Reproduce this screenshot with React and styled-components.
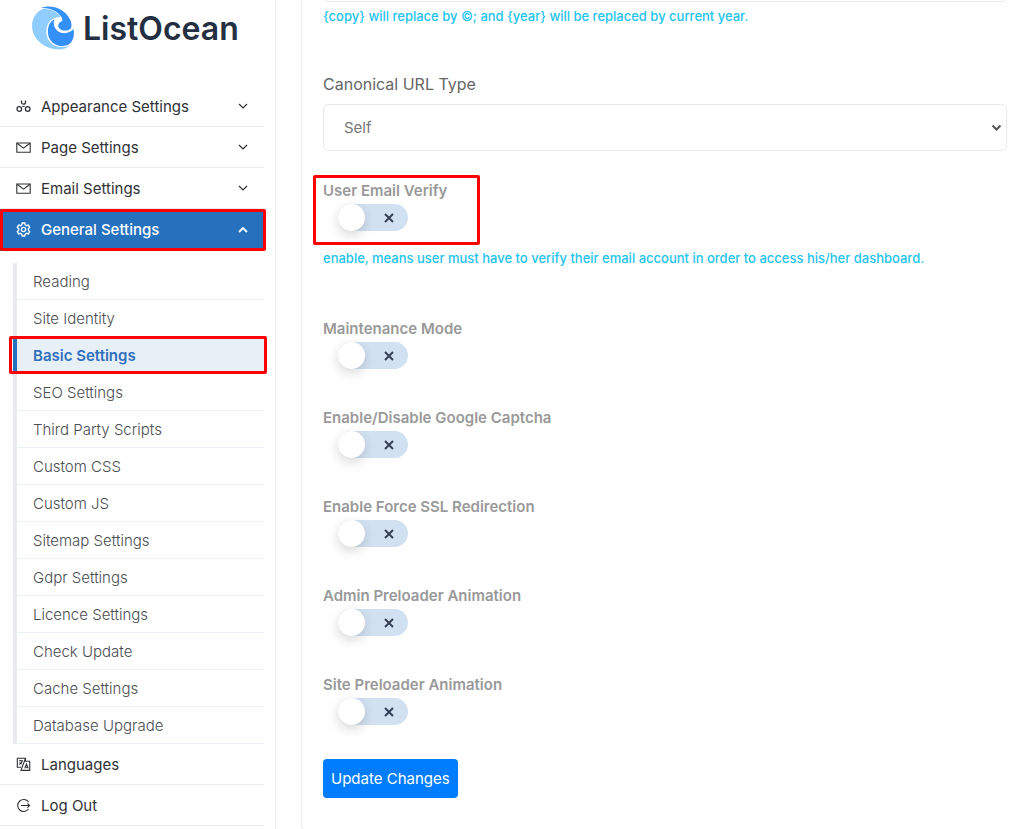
import React, { useState } from "react";
import styled, { createGlobalStyle } from "styled-components";

const GlobalStyle = createGlobalStyle`
  * {
    box-sizing: border-box;
  }
  body {
    margin: 0;
    background: #fff;
    font-family: Inter, "Liberation Sans", sans-serif;
  }
`;

const Page = styled.div`
  display: flex;
  gap: 25px;
  min-height: 100vh;
  overflow: hidden;
`;

const Sidebar = styled.aside`
  width: 276px;
  flex-shrink: 0;
  padding-right: 11px;
  border-right: 1px solid #ececf1;
`;

const Logo = styled.a`
  display: flex;
  align-items: center;
  gap: 8px;
  height: 86px;
  padding: 6px 0 36px 31px;
  color: #243042;
  font-size: 32px;
  font-weight: 600;
  text-decoration: none;
`;

const List = styled.ul`
  margin: 0;
  padding: 0;
  list-style: none;
`;

// red frame drawn around the parts a user should look at
const Marked = styled.div`
  position: relative;
  &::after {
    content: "";
    position: absolute;
    inset: ${props => props.$inset || "0"};
    border: 3px solid #fe0000;
    border-radius: 2px;
    pointer-events: none;
  }
`;

const NavLink = styled.a`
  display: flex;
  align-items: center;
  gap: 10px;
  height: ${props => (props.$active ? "42px" : "41px")};
  padding: 0 15px 0 16px;
  border-bottom: 1px solid ${props => (props.$active ? "#2671be" : "#ebedf2")};
  background: ${props => (props.$active ? "#2671be" : "transparent")};
  color: ${props => (props.$active ? "#fff" : "#303236")};
  font-size: 15px;
  font-weight: ${props => (props.$active ? 500 : 400)};
  text-decoration: none;
  svg:last-child:not(:first-child) {
    margin-left: auto;
  }
`;

const SubList = styled(List)`
  margin: 12px 0 0 13px;
`;

const SubLink = styled.a`
  display: flex;
  align-items: center;
  height: 37px;
  padding-left: 16px;
  border-left: 4px solid ${props => (props.$active ? "#2671be" : "#e9eaf0")};
  border-bottom: 1px solid #ecf2f8;
  background: ${props => (props.$active ? "#e7eff7" : "transparent")};
  color: ${props => (props.$active ? "#3070bd" : "#4a4d52")};
  font-size: 15px;
  font-weight: ${props => (props.$active ? 600 : 300)};
  text-decoration: none;
`;

const Card = styled.main`
  flex: 1;
  min-width: 0;
  padding: 0 17px 31px 21px;
  border-left: 1px solid #ececf1;
  border-bottom: 1px solid #ececf1;
  border-bottom-left-radius: 5px;
`;

const TextBox = styled.input`
  display: block;
  width: 100%;
  height: 47px;
  margin-top: -45px;
  padding: 0 20px;
  border: 1px solid #e9eaee;
  border-radius: 5px;
  font: inherit;
`;

const Help = styled.p`
  margin: 0;
  color: #22c3ee;
  font-size: 13px;
  line-height: 20px;
  font-weight: 500;
`;

const FooterHelp = styled(Help)`
  margin-top: 4px;
`;

const SelectLabel = styled.label`
  display: block;
  margin: 46px 0 8px;
  color: #666;
  font-size: 16px;
  line-height: 24px;
`;

const SelectWrap = styled.div`
  position: relative;
  svg {
    position: absolute;
    top: 20px;
    right: 5px;
    pointer-events: none;
  }
`;

const Select = styled.select`
  display: block;
  width: 100%;
  height: 47px;
  padding: 0 20px;
  border: 1px solid #e9eaf0;
  border-radius: 5px;
  background: #fff;
  color: #777;
  font-family: inherit;
  font-size: 15px;
  appearance: none;
`;

const Fields = styled.div`
  display: flex;
  flex-direction: column;
  padding: 30px 0 34px;
`;

const Field = styled.div`
  padding-bottom: ${props => (props.$last ? "0" : "39px")};
`;

const FieldLabel = styled.label`
  display: block;
  width: fit-content;
  color: #999;
  font-size: 15px;
  line-height: 20px;
  font-weight: 600;
`;

const FieldHelp = styled(Help)`
  margin: 17px 0 12px;
`;

const SwitchBox = styled.div`
  position: relative;
  width: 70px;
  height: 27px;
  margin-left: 15px;
  margin-top: 3px;
  svg {
    position: absolute;
    top: 9px;
    left: 46px;
    pointer-events: none;
  }
  input:checked + svg {
    display: none;
  }
`;

const Toggle = styled.input`
  appearance: none;
  display: block;
  width: 70px;
  height: 27px;
  margin: 0;
  border-radius: 14px;
  background: #d2e1f1;
  cursor: pointer;
  &::before {
    content: "";
    display: block;
    width: 27px;
    height: 27px;
    border-radius: 50%;
    background: #fff;
    box-shadow: 0 4px 12px rgba(0, 0, 0, 0.16);
  }
  &:checked {
    background: #2671be;
  }
  &:checked::before {
    margin-left: 43px;
  }
`;

const Button = styled.button`
  height: 39px;
  padding: 0 8px;
  border: 0;
  border-radius: 4px;
  background: #007dff;
  color: #fff;
  font-family: inherit;
  font-size: 15px;
  cursor: pointer;
`;

const LogoMark = () => (
  <svg width="44" height="44" viewBox="0 0 132 132">
    <path
      d="M92 130C55 132 22 114 9 86C-4 56 5 22 36 8C60 8 80 18 89 33C62 34 46 50 46 78C47 106 66 124 96 123C104 123 110 121 116 118C110 125 102 129 92 130Z"
      fill="#90cdff"
    />
    <path
      d="M30 6C56 -5 90 4 109 28C120 42 125 58 119 68C107 78 86 74 82 62C80 54 86 48 94 45C94 40 93 37 92 34C79 14 56 5 30 6Z"
      fill="#3390fb"
    />
    <path
      d="M70 40C64 56 73 75 90 80C104 84 119 79 127 69C133 90 124 112 107 118C87 124 62 116 53 92C47 70 53 49 70 40Z"
      fill="#3390fb"
    />
  </svg>
);

const paths = {
  circles: (
    <>
      <path
        d="M5.5 1.5v1.7a2 2 0 0 0 4 0V1.5"
        strokeWidth="1.3"
      />
      <circle cx="3.3" cy="10" r="2.3" strokeWidth="1.3" />
      <circle cx="11.7" cy="10" r="2.3" strokeWidth="1.3" />
      <path d="M6.4 7.4h2.2" />
    </>
  ),
  mail: (
    <>
      <path d="M.8 3h13.4v9.2H.8z" />
      <path d="M1 3.2l6.5 4.9L14 3.2" />
    </>
  ),
  gear: (
    <>
      <path
        d="M6.2 1h2.6l.4 1.9 1.3.8 1.9-.6 1.3 2.2-1.4 1.4v1.6l1.4 1.4-1.3 2.2-1.9-.6-1.3.8-.4 1.9H6.2l-.4-1.9-1.3-.8-1.9.6-1.3-2.2 1.4-1.4V6.7L1.3 5.3l1.3-2.2 1.9.6 1.3-.8z"
        strokeWidth="1.3"
      />
      <circle cx="7.5" cy="7.5" r="2.1" strokeWidth="1.3" />
    </>
  ),
  translate: (
    <>
      <path d="M5 10.3H1.3V1.2h8.2v3.1M9.5 1.2L5 13.4h8.7V4.3H8.6" />
      <path d="M3 3.8h4M5 3v1M6.2 4c-.4 1.8-1.5 2.8-3 3.5M3.8 5.3c.4.8 1 1.4 1.8 1.8M8.8 11.4l1.7-4.3 1.7 4.3M9.4 10.2h2.2" />
    </>
  ),
  logout: (
    <>
      <path d="M12.6 4a6 6 0 1 0 0 7" />
      <path d="M5 7.5h8.6M11.5 5.4l2.1 2.1-2.1 2.1" />
    </>
  )
};

const Icon = ({ name }) => (
  <svg
    width="15"
    height="15"
    viewBox="0 0 15 15"
    fill="none"
    stroke="currentColor"
    strokeWidth="1.1"
  >
    {paths[name]}
  </svg>
);

const Chevron = ({ up }) => (
  <svg
    width="12"
    height="12"
    viewBox="0 0 12 12"
    fill="none"
    stroke="currentColor"
    strokeWidth={up ? 1.8 : 1.2}
  >
    <path d={up ? "M2 8l4-4 4 4" : "M2 4l4 4 4-4"} />
  </svg>
);

const topItems = [
  { text: "Appearance Settings", icon: "circles" },
  { text: "Page Settings", icon: "mail" },
  { text: "Email Settings", icon: "mail" }
];

const subItems = [
  "Reading",
  "Site Identity",
  "Basic Settings",
  "SEO Settings",
  "Third Party Scripts",
  "Custom CSS",
  "Custom JS",
  "Sitemap Settings",
  "Gdpr Settings",
  "Licence Settings",
  "Check Update",
  "Cache Settings",
  "Database Upgrade"
];

const switches = [
  { id: "maintenance", text: "Maintenance Mode" },
  { id: "captcha", text: "Enable/Disable Google Captcha" },
  { id: "ssl", text: "Enable Force SSL Redirection" },
  { id: "admin-preloader", text: "Admin Preloader Animation" },
  { id: "site-preloader", text: "Site Preloader Animation" }
];

const Switch = ({ id, text }) => {
  const [on, setOn] = useState(false);
  return (
    <>
      <FieldLabel htmlFor={id}>{text}</FieldLabel>
      <SwitchBox>
        <Toggle
          id={id}
          type="checkbox"
          checked={on}
          onChange={() => setOn(!on)}
        />
        <svg width="10" height="10" viewBox="0 0 10 10">
          <path d="M1 1l8 8M9 1l-8 8" stroke="#333d54" strokeWidth="1.9" />
        </svg>
      </SwitchBox>
    </>
  );
};

const MarkedField = styled(Marked)`
  width: 157px;
`;

const SideMenu = () => (
  <Sidebar>
    <Logo href="#">
      <LogoMark />
      ListOcean
    </Logo>
    <nav>
      <List>
        {topItems.map(item => (
          <li key={item.text}>
            <NavLink href="#">
              <Icon name={item.icon} />
              {item.text}
              <Chevron />
            </NavLink>
          </li>
        ))}
        <li>
          <Marked $inset="0 -2px 0 0">
            <NavLink href="#" $active>
              <Icon name="gear" />
              General Settings
              <Chevron up />
            </NavLink>
          </Marked>
          <SubList>
            {subItems.map(text => (
              <li key={text}>
                {text === "Basic Settings" ? (
                  <Marked $inset="-1px -3px 0 -4px">
                    <SubLink href="#" $active>
                      {text}
                    </SubLink>
                  </Marked>
                ) : (
                  <SubLink href="#">{text}</SubLink>
                )}
              </li>
            ))}
          </SubList>
        </li>
        <li>
          <NavLink href="#">
            <Icon name="translate" />
            Languages
          </NavLink>
        </li>
        <li>
          <NavLink href="#">
            <Icon name="logout" />
            Log Out
          </NavLink>
        </li>
      </List>
    </nav>
  </Sidebar>
);

const App = () => (
  <>
    <GlobalStyle />
    <Page>
      <SideMenu />
      <Card>
        <form onSubmit={e => e.preventDefault()}>
          <TextBox type="text" aria-label="Footer Copyright" />
          <FooterHelp>
            {"{copy} will replace by ©; and {year} will be replaced by current year."}
          </FooterHelp>
          <SelectLabel htmlFor="canonical">Canonical URL Type</SelectLabel>
          <SelectWrap>
            <Select id="canonical">
              <option>Self</option>
              <option>Alternative</option>
            </Select>
            <svg width="11" height="8" viewBox="0 0 11 8" fill="none">
              <path d="M1.5 1.5l4 4 4-4" stroke="#555" strokeWidth="2" />
            </svg>
          </SelectWrap>
          <Fields>
            <Field>
              <MarkedField $inset="-6px 0 -14px -10px">
                <Switch id="email-verify" text="User Email Verify" />
              </MarkedField>
              <FieldHelp>
                enable, means user must have to verify their email account in
                order to access his/her dashboard.
              </FieldHelp>
            </Field>
            {switches.map((item, i) => (
              <Field key={item.id} $last={i === switches.length - 1}>
                <Switch id={item.id} text={item.text} />
              </Field>
            ))}
          </Fields>
          <Button type="submit">Update Changes</Button>
        </form>
      </Card>
    </Page>
  </>
);

export default App;
